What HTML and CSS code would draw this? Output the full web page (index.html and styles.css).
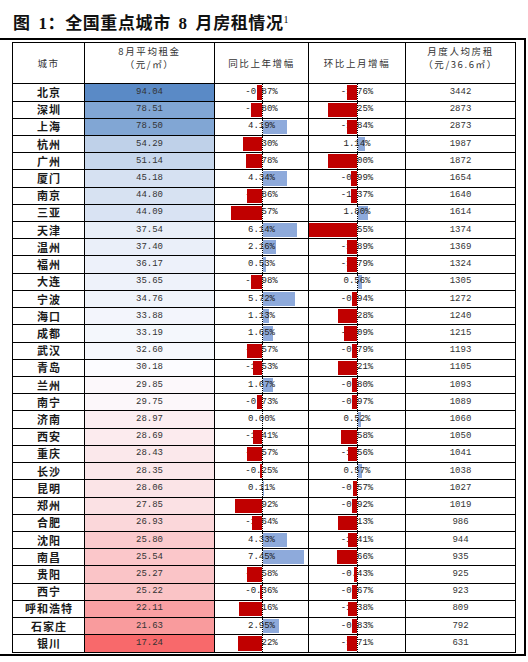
FILE: index.html
```html
<!DOCTYPE html>
<html lang="zh-CN">
<head>
<meta charset="utf-8">
<title>全国重点城市8月房租情况</title>
<link rel="stylesheet" href="styles.css">
</head>
<body>
<div class="title">图 1：全国重点城市 8 月房租情况<sup>1</sup></div>
<div class="frame">
<div class="grid">
<div class="c h">城市</div>
<div class="c h two">8月平均租金<br>（元/㎡）</div>
<div class="c h">同比上年增幅</div>
<div class="c h">环比上月增幅</div>
<div class="c h two">月度人均房租<br>（元/36.6㎡）</div>

<div class="c city">北京</div><div class="c num" style="background:rgb(90,138,198)">94.04</div>
<div class="c bar"><span class="pos"></span><span class="v">-0.87%</span><span class="neg"><i style="width:4.8px"></i></span></div>
<div class="c bar"><span class="pos"></span><span class="v">-1.76%</span><span class="neg"><i style="width:10.4px"></i></span></div>
<div class="c num">3442</div>

<div class="c city">深圳</div><div class="c num" style="background:rgb(129,166,212)">78.51</div>
<div class="c bar"><span class="pos"></span><span class="v">-1.80%</span><span class="neg"><i style="width:10.7px"></i></span></div>
<div class="c bar"><span class="pos"></span><span class="v">-5.25%</span><span class="neg"><i style="width:29.4px"></i></span></div>
<div class="c num">2873</div>

<div class="c city">上海</div><div class="c num" style="background:rgb(129,166,212)">78.50</div>
<div class="c bar"><span class="pos"><i style="width:24.3px"></i></span><span class="v">4.19%</span><span class="neg"></span></div>
<div class="c bar"><span class="pos"></span><span class="v">-1.84%</span><span class="neg"><i style="width:10.4px"></i></span></div>
<div class="c num">2873</div>

<div class="c city">杭州</div><div class="c num" style="background:rgb(191,209,233)">54.29</div>
<div class="c bar"><span class="pos"></span><span class="v">-3.30%</span><span class="neg"><i style="width:18.4px"></i></span></div>
<div class="c bar"><span class="pos"><i style="width:7.3px"></i></span><span class="v">1.14%</span><span class="neg"></span></div>
<div class="c num">1987</div>

<div class="c city">广州</div><div class="c num" style="background:rgb(199,215,236)">51.14</div>
<div class="c bar"><span class="pos"></span><span class="v">-2.78%</span><span class="neg"><i style="width:15.7px"></i></span></div>
<div class="c bar"><span class="pos"></span><span class="v">-5.00%</span><span class="neg"><i style="width:28.7px"></i></span></div>
<div class="c num">1872</div>

<div class="c city">厦门</div><div class="c num" style="background:rgb(214,225,242)">45.18</div>
<div class="c bar"><span class="pos"><i style="width:24px"></i></span><span class="v">4.34%</span><span class="neg"></span></div>
<div class="c bar"><span class="pos"></span><span class="v">-0.99%</span><span class="neg"><i style="width:6px"></i></span></div>
<div class="c num">1654</div>

<div class="c city">南京</div><div class="c num" style="background:rgb(215,226,242)">44.80</div>
<div class="c bar"><span class="pos"></span><span class="v">-2.86%</span><span class="neg"><i style="width:15px"></i></span></div>
<div class="c bar"><span class="pos"></span><span class="v">-1.37%</span><span class="neg"><i style="width:6.5px"></i></span></div>
<div class="c num">1640</div>

<div class="c city">三亚</div><div class="c num" style="background:rgb(217,227,243)">44.09</div>
<div class="c bar"><span class="pos"></span><span class="v">-5.57%</span><span class="neg"><i style="width:31px"></i></span></div>
<div class="c bar"><span class="pos"><i style="width:10px"></i></span><span class="v">1.80%</span><span class="neg"></span></div>
<div class="c num">1614</div>

<div class="c city">天津</div><div class="c num" style="background:rgb(233,239,248)">37.54</div>
<div class="c bar"><span class="pos"><i style="width:34.3px"></i></span><span class="v">6.14%</span><span class="neg"></span></div>
<div class="c bar"><span class="pos"></span><span class="v">-8.55%</span><span class="neg"><i style="width:48px"></i></span></div>
<div class="c num">1374</div>

<div class="c city">温州</div><div class="c num" style="background:rgb(234,239,249)">37.40</div>
<div class="c bar"><span class="pos"><i style="width:13.3px"></i></span><span class="v">2.16%</span><span class="neg"></span></div>
<div class="c bar"><span class="pos"></span><span class="v">-1.89%</span><span class="neg"><i style="width:10.4px"></i></span></div>
<div class="c num">1369</div>

<div class="c city">福州</div><div class="c num" style="background:rgb(237,241,250)">36.17</div>
<div class="c bar"><span class="pos"><i style="width:3.3px"></i></span><span class="v">0.53%</span><span class="neg"></span></div>
<div class="c bar"><span class="pos"></span><span class="v">-1.79%</span><span class="neg"><i style="width:10.4px"></i></span></div>
<div class="c num">1324</div>

<div class="c city">大连</div><div class="c num" style="background:rgb(238,242,250)">35.65</div>
<div class="c bar"><span class="pos"></span><span class="v">-1.98%</span><span class="neg"><i style="width:10.7px"></i></span></div>
<div class="c bar"><span class="pos"><i style="width:4px"></i></span><span class="v">0.56%</span><span class="neg"></span></div>
<div class="c num">1305</div>

<div class="c city">宁波</div><div class="c num" style="background:rgb(240,244,251)">34.76</div>
<div class="c bar"><span class="pos"><i style="width:32.3px"></i></span><span class="v">5.72%</span><span class="neg"></span></div>
<div class="c bar"><span class="pos"></span><span class="v">-0.94%</span><span class="neg"><i style="width:5.4px"></i></span></div>
<div class="c num">1272</div>

<div class="c city">海口</div><div class="c num" style="background:rgb(243,245,252)">33.88</div>
<div class="c bar"><span class="pos"><i style="width:6.7px"></i></span><span class="v">1.13%</span><span class="neg"></span></div>
<div class="c bar"><span class="pos"></span><span class="v">-3.28%</span><span class="neg"><i style="width:19.4px"></i></span></div>
<div class="c num">1240</div>

<div class="c city">成都</div><div class="c num" style="background:rgb(244,247,252)">33.19</div>
<div class="c bar"><span class="pos"><i style="width:10px"></i></span><span class="v">1.65%</span><span class="neg"></span></div>
<div class="c bar"><span class="pos"></span><span class="v">-2.09%</span><span class="neg"><i style="width:12.7px"></i></span></div>
<div class="c num">1215</div>

<div class="c city">武汉</div><div class="c num" style="background:rgb(246,248,253)">32.60</div>
<div class="c bar"><span class="pos"></span><span class="v">-2.57%</span><span class="neg"><i style="width:15px"></i></span></div>
<div class="c bar"><span class="pos"></span><span class="v">-0.79%</span><span class="neg"><i style="width:5.4px"></i></span></div>
<div class="c num">1193</div>

<div class="c city">青岛</div><div class="c num" style="background:rgb(252,252,255)">30.18</div>
<div class="c bar"><span class="pos"></span><span class="v">-1.53%</span><span class="neg"><i style="width:8.4px"></i></span></div>
<div class="c bar"><span class="pos"></span><span class="v">-3.21%</span><span class="neg"><i style="width:18.7px"></i></span></div>
<div class="c num">1105</div>

<div class="c city">兰州</div><div class="c num" style="background:rgb(252,248,251)">29.85</div>
<div class="c bar"><span class="pos"><i style="width:10.6px"></i></span><span class="v">1.67%</span><span class="neg"></span></div>
<div class="c bar"><span class="pos"></span><span class="v">-0.80%</span><span class="neg"><i style="width:5.4px"></i></span></div>
<div class="c num">1093</div>

<div class="c city">南宁</div><div class="c num" style="background:rgb(252,247,250)">29.75</div>
<div class="c bar"><span class="pos"></span><span class="v">-0.73%</span><span class="neg"><i style="width:4.5px"></i></span></div>
<div class="c bar"><span class="pos"></span><span class="v">-0.97%</span><span class="neg"><i style="width:5.4px"></i></span></div>
<div class="c num">1089</div>

<div class="c city">济南</div><div class="c num" style="background:rgb(252,238,241)">28.97</div>
<div class="c bar"><span class="pos"></span><span class="v">0.00%</span><span class="neg"></span></div>
<div class="c bar"><span class="pos"><i style="width:3.3px"></i></span><span class="v">0.52%</span><span class="neg"></span></div>
<div class="c num">1060</div>

<div class="c city">西安</div><div class="c num" style="background:rgb(252,235,238)">28.69</div>
<div class="c bar"><span class="pos"></span><span class="v">-1.41%</span><span class="neg"><i style="width:8.4px"></i></span></div>
<div class="c bar"><span class="pos"></span><span class="v">-2.58%</span><span class="neg"><i style="width:16px"></i></span></div>
<div class="c num">1050</div>

<div class="c city">重庆</div><div class="c num" style="background:rgb(251,232,235)">28.43</div>
<div class="c bar"><span class="pos"></span><span class="v">-2.57%</span><span class="neg"><i style="width:15px"></i></span></div>
<div class="c bar"><span class="pos"></span><span class="v">-1.56%</span><span class="neg"><i style="width:9.4px"></i></span></div>
<div class="c num">1041</div>

<div class="c city">长沙</div><div class="c num" style="background:rgb(251,231,234)">28.35</div>
<div class="c bar"><span class="pos"></span><span class="v">-0.25%</span><span class="neg"><i style="width:1.5px"></i></span></div>
<div class="c bar"><span class="pos"><i style="width:4px"></i></span><span class="v">0.57%</span><span class="neg"></span></div>
<div class="c num">1038</div>

<div class="c city">昆明</div><div class="c num" style="background:rgb(251,228,231)">28.06</div>
<div class="c bar"><span class="pos"><i style="width:1px"></i></span><span class="v">0.11%</span><span class="neg"></span></div>
<div class="c bar"><span class="pos"></span><span class="v">-0.57%</span><span class="neg"><i style="width:4.4px"></i></span></div>
<div class="c num">1027</div>

<div class="c city">郑州</div><div class="c num" style="background:rgb(251,225,228)">27.85</div>
<div class="c bar"><span class="pos"></span><span class="v">-4.92%</span><span class="neg"><i style="width:26.7px"></i></span></div>
<div class="c bar"><span class="pos"></span><span class="v">-0.92%</span><span class="neg"><i style="width:5.4px"></i></span></div>
<div class="c num">1019</div>

<div class="c city">合肥</div><div class="c num" style="background:rgb(251,215,218)">26.93</div>
<div class="c bar"><span class="pos"></span><span class="v">-1.64%</span><span class="neg"><i style="width:10px"></i></span></div>
<div class="c bar"><span class="pos"></span><span class="v">-3.13%</span><span class="neg"><i style="width:18.7px"></i></span></div>
<div class="c num">986</div>

<div class="c city">沈阳</div><div class="c num" style="background:rgb(251,202,205)">25.80</div>
<div class="c bar"><span class="pos"><i style="width:24px"></i></span><span class="v">4.33%</span><span class="neg"></span></div>
<div class="c bar"><span class="pos"></span><span class="v">-1.41%</span><span class="neg"><i style="width:8.7px"></i></span></div>
<div class="c num">944</div>

<div class="c city">南昌</div><div class="c num" style="background:rgb(251,199,202)">25.54</div>
<div class="c bar"><span class="pos"><i style="width:41px"></i></span><span class="v">7.45%</span><span class="neg"></span></div>
<div class="c bar"><span class="pos"></span><span class="v">-3.66%</span><span class="neg"><i style="width:20.4px"></i></span></div>
<div class="c num">935</div>

<div class="c city">贵阳</div><div class="c num" style="background:rgb(250,196,199)">25.27</div>
<div class="c bar"><span class="pos"></span><span class="v">-2.58%</span><span class="neg"><i style="width:14.4px"></i></span></div>
<div class="c bar"><span class="pos"></span><span class="v">-0.43%</span><span class="neg"><i style="width:3.4px"></i></span></div>
<div class="c num">925</div>

<div class="c city">西宁</div><div class="c num" style="background:rgb(250,196,198)">25.22</div>
<div class="c bar"><span class="pos"></span><span class="v">-0.36%</span><span class="neg"><i style="width:2px"></i></span></div>
<div class="c bar"><span class="pos"></span><span class="v">-0.67%</span><span class="neg"><i style="width:5.4px"></i></span></div>
<div class="c num">923</div>

<div class="c city">呼和浩特</div><div class="c num" style="background:rgb(250,160,163)">22.11</div>
<div class="c bar"><span class="pos"></span><span class="v">-4.16%</span><span class="neg"><i style="width:22.7px"></i></span></div>
<div class="c bar"><span class="pos"></span><span class="v">-1.38%</span><span class="neg"><i style="width:8.7px"></i></span></div>
<div class="c num">809</div>

<div class="c city">石家庄</div><div class="c num" style="background:rgb(249,155,157)">21.63</div>
<div class="c bar"><span class="pos"><i style="width:16.6px"></i></span><span class="v">2.95%</span><span class="neg"></span></div>
<div class="c bar"><span class="pos"></span><span class="v">-0.83%</span><span class="neg"><i style="width:5.4px"></i></span></div>
<div class="c num">792</div>

<div class="c city">银川</div><div class="c num" style="background:rgb(248,105,107)">17.24</div>
<div class="c bar"><span class="pos"></span><span class="v">-4.22%</span><span class="neg"><i style="width:24px"></i></span></div>
<div class="c bar"><span class="pos"></span><span class="v">-1.71%</span><span class="neg"><i style="width:10.4px"></i></span></div>
<div class="c num">631</div>
</div>
</div>
</body>
</html>
```
FILE: styles.css
```css
html, body {
  margin: 0;
  padding: 0;
  background: #fff;
}
body {
  width: 528px;
  height: 662px;
  overflow: hidden;
}
.title {
  box-sizing: border-box;
  height: 38px;
  padding: 14px 0 0 13px;
  font-family: "Liberation Serif", "Noto Sans CJK SC", serif;
  font-weight: 700;
  font-size: 17px;
  line-height: 20px;
  letter-spacing: 0.6px;
  word-spacing: 3px;
  color: #111;
  white-space: nowrap;
}
.title sup {
  font-size: 10px;
  line-height: 1;
  vertical-align: 6px;
  font-weight: 400;
}
.frame {
  box-sizing: border-box;
  width: 526px;
  border-top: 2px solid #000;
  border-right: 2px solid #000;
  border-bottom: 2px solid #000;
  padding: 1.7px 0 1.4px 12px;
}
.grid {
  box-sizing: border-box;
  width: 504px;
  display: grid;
  grid-template-columns: 71px 129px 93px 96px 109px;
  grid-template-rows: 40.6px repeat(33, 16.22px);
  gap: 1px;
  padding: 1px;
  background: #000;
}
.c {
  background: #fff;
  display: flex;
  align-items: center;
  justify-content: center;
  min-width: 0;
  overflow: hidden;
}
.h {
  font-family: "Noto Sans CJK SC", sans-serif;
  font-size: 9.5px;
  line-height: 13px;
  letter-spacing: 1.6px;
  color: #333;
  text-align: center;
  padding-top: 1px;
}
.h.two {
  padding-top: 0;
  padding-bottom: 10px;
}
.city {
  font-family: "Noto Sans CJK SC", sans-serif;
  font-weight: 700;
  font-size: 11px;
  line-height: 1;
  letter-spacing: 1px;
  padding-left: 1px;
  color: #1a1a1a;
}
.num, .v {
  font-family: "Liberation Mono", monospace;
  font-size: 9px;
  line-height: 1;
  color: #333;
}
.bar {
  display: grid;
  grid-template-columns: 1fr 1fr;
  grid-template-rows: 1fr;
  align-items: stretch;
  justify-items: stretch;
}
.pos {
  grid-area: 1 / 2 / 2 / 3;
  display: flex;
  align-items: center;
  border-left: 1px dotted #000;
}
.pos i {
  display: block;
  height: calc(100% - 2px);
  background: #8eaadb;
}
.v {
  grid-area: 1 / 1 / 2 / 3;
  align-self: center;
  justify-self: center;
  color: #222;
}
.neg {
  grid-area: 1 / 1 / 2 / 2;
  display: flex;
  justify-content: flex-end;
  align-items: center;
}
.neg i {
  display: block;
  height: calc(100% - 2px);
  background: #c00000;
}
```
